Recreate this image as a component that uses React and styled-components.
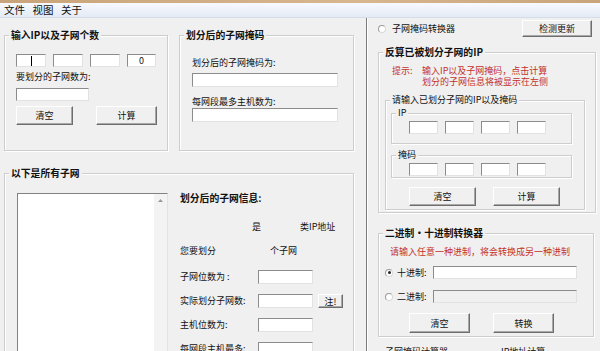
import React from 'react'
import styled, { createGlobalStyle } from 'styled-components'

var RED = '#c3302c'

var GlobalStyle = createGlobalStyle`
  html, body {
    margin: 0;
    padding: 0;
    background: #f0f0f0;
  }
  * {
    box-sizing: border-box;
  }
`

var Window = styled.div`
  width: 600px;
  height: 351px;
  overflow: hidden;
  background: #f0f0f0;
  font-family: "Noto Sans CJK SC", "Noto Sans", sans-serif;
  font-size: 9px;
  line-height: 12px;
  color: #111;
`
var TitleStrip = styled.div`
  height: 3px;
  background: linear-gradient(90deg, #c9a47a, #d8b68e 60%, #c9a47a);
`
var MenuBar = styled.div`
  height: 15px;
  display: flex;
  align-items: center;
  gap: 7.5px;
  padding-left: 4px;
  font-size: 10.5px;
  background: linear-gradient(#f7f9fd, #e4ebf5);
  border-bottom: 1px solid #d5dde8;
`
var MenuItem = styled.span`
  line-height: 14px;
`
var Main = styled.div`
  display: flex;
  height: 333px;
`
var LeftPane = styled.div`
  width: 367px;
  flex: none;
  padding-left: 4px;
  border-right: 1px solid #7a7a7a;
  overflow: hidden;
`
var RightPane = styled.div`
  flex: 1;
  display: flex;
  flex-direction: column;
  align-items: flex-start;
  padding-left: 10px;
  border-left: 1px solid #fff;
  overflow: hidden;
`
var TopRow = styled.div`
  display: flex;
  gap: 11px;
  margin-top: 17px;
`
var Group = styled.div`
  position: relative;
  flex: none;
  width: ${p => p.$w}px;
  height: ${p => p.$h}px;
  margin: ${p => p.$m || '0'};
  padding: ${p => p.$pad || '0'};
  display: flex;
  flex-direction: ${p => p.$row ? 'row' : 'column'};
  align-items: flex-start;
  border: 1px solid #cdcdcd;
  box-shadow: 1px 1px 0 #fff, inset 1px 1px 0 #fff;
`
var GroupTitle = styled.span`
  position: absolute;
  top: -8px;
  left: 4px;
  padding: 0 2px;
  background: #f0f0f0;
  font-size: ${p => p.$bold ? '9.8px' : '9px'};
  font-weight: ${p => p.$bold ? 700 : 400};
  line-height: 14px;
  white-space: nowrap;
`
var Label = styled.div`
  margin-top: ${p => p.$mt || 0}px;
  line-height: 12px;
  white-space: nowrap;
`
var Field = styled.div`
  flex: none;
  width: ${p => p.$w}px;
  height: ${p => p.$h || 13}px;
  margin-top: ${p => p.$mt || 0}px;
  display: flex;
  align-items: center;
  justify-content: center;
  background: ${p => p.$off ? '#f0f0f0' : '#fff'};
  border: 1px solid;
  border-color: #8c8c8c #e2e2e2 #e2e2e2 #8c8c8c;
  font-size: 9px;
`
var Caret = styled.span`
  width: 1px;
  height: 10px;
  background: #000;
`
var FieldRow = styled.div`
  display: flex;
  gap: 7px;
`
var ButtonRow = styled.div`
  display: flex;
  gap: ${p => p.$gap}px;
  margin-top: ${p => p.$mt || 0}px;
  padding-left: ${p => p.$pl || 0}px;
`
var Button = styled.button`
  flex: none;
  width: ${p => p.$w}px;
  height: ${p => p.$h || 19}px;
  margin: ${p => p.$m || '0'};
  padding: 0;
  font-family: inherit;
  font-size: 9px;
  color: #111;
  background: #f0f0f0;
  border: 1px solid;
  border-color: #fff #6e6e6e #6e6e6e #fff;
  box-shadow: inset -1px -1px 0 #a8a8a8;
`
var ListBox = styled.div`
  display: flex;
  width: 151px;
  height: 170px;
  margin: 19px 0 0 12px;
  border: 1px solid;
  border-color: #828282 #e2e2e2 #e2e2e2 #828282;
`
var ListArea = styled.div`
  flex: 1;
  background: #fff;
`
var ScrollBar = styled.div`
  width: 13px;
  background: #f3f3f3;
  display: flex;
  flex-direction: column;
`
var ScrollArrow = styled.div`
  height: 13px;
  display: flex;
  align-items: center;
  justify-content: center;
`
var InfoCol = styled.div`
  display: flex;
  flex-direction: column;
  margin-left: 12px;
  padding-top: 17px;
`
var InfoTitle = styled.div`
  font-size: 9.8px;
  font-weight: 700;
  line-height: 14px;
`
var InfoLine = styled.div`
  display: flex;
  margin-top: ${p => p.$mt}px;
  line-height: 12px;
`
var Cell = styled.span`
  width: ${p => p.$w}px;
  flex: none;
`
var FormGrid = styled.div`
  display: grid;
  grid-template-columns: 78px 55px auto;
  grid-auto-rows: 14px;
  row-gap: 10px;
  align-items: center;
  margin-top: 13px;
`
var TopBar = styled.div`
  display: flex;
  align-items: center;
  width: 100%;
  height: 17px;
  margin-top: 2px;
`
var Radio = styled.span`
  flex: none;
  width: 8px;
  height: 8px;
  border-radius: 50%;
  border: 1px solid #9c9c9c;
  border-right-color: #d8d8d8;
  border-bottom-color: #d8d8d8;
  background: #fff;
  display: flex;
  align-items: center;
  justify-content: center;
  &::after {
    content: '';
    width: 3px;
    height: 3px;
    border-radius: 50%;
    background: ${p => p.$on ? '#222' : 'transparent'};
  }
`
var RadioText = styled.span`
  margin-left: ${p => p.$ml || 6}px;
  width: ${p => p.$w ? p.$w + 'px' : 'auto'};
  flex: none;
  white-space: nowrap;
`
var Hint = styled.div`
  display: flex;
  color: ${RED};
  margin: 12px 0 0 13px;
  line-height: 11px;
`
var HintHead = styled.span`
  width: 30px;
  flex: none;
`
var RedLine = styled.div`
  color: ${RED};
  margin: 12px 0 0 11px;
  line-height: 12px;
  white-space: nowrap;
`
var RadioRow = styled.div`
  display: flex;
  align-items: center;
  height: 13px;
  margin-top: ${p => p.$mt}px;
  padding-left: 6px;
`
var FooterRow = styled.div`
  display: flex;
  margin-top: 9px;
  padding-left: 7px;
`

function Fields({ values = ['', '', '', ''], w = 30, last = 29, caret }) {
  return (
    <FieldRow>
      {values.map((v, i) => (
        <Field key={i} $w={i === 3 ? last : w}>
          {caret && i === 0 ? <Caret /> : v}
        </Field>
      ))}
    </FieldRow>
  )
}

export default function App() {
  return (
    <Window>
      <GlobalStyle />
      <TitleStrip />
      <MenuBar>
        <MenuItem>文件</MenuItem>
        <MenuItem>视图</MenuItem>
        <MenuItem>关于</MenuItem>
      </MenuBar>
      <Main>
        <LeftPane>
          <TopRow>
            <Group $w={164} $h={116} $pad="18px 0 0 11px">
              <GroupTitle $bold>输入IP以及子网个数</GroupTitle>
              <Fields values={['', '', '', '0']} caret />
              <Label $mt={4}>要划分的子网数为:</Label>
              <Field $w={73} $mt={5} />
              <ButtonRow $gap={23} $mt={5}>
                <Button $w={57}>清空</Button>
                <Button $w={61}>计算</Button>
              </ButtonRow>
            </Group>
            <Group $w={175} $h={116} $pad="21px 0 0 12px">
              <GroupTitle $bold>划分后的子网掩码</GroupTitle>
              <Label>划分后的子网掩码为:</Label>
              <Field $w={146} $h={14} $mt={4} />
              <Label $mt={9}>每网段最多主机数为:</Label>
              <Field $w={146} $h={14} />
            </Group>
          </TopRow>
          <Group $w={350} $h={200} $m="22px 0 0 0" $row>
            <GroupTitle $bold>以下是所有子网</GroupTitle>
            <ListBox>
              <ListArea />
              <ScrollBar>
                <ScrollArrow>
                  <svg width="5" height="3" viewBox="0 0 5 3">
                    <path d="M0 3 L2.5 0 L5 3 Z" fill="#9a9a9a" />
                  </svg>
                </ScrollArrow>
              </ScrollBar>
            </ListBox>
            <InfoCol>
              <InfoTitle>划分后的子网信息:</InfoTitle>
              <InfoLine $mt={16}>
                <Cell $w={72} />
                <Cell $w={48}>是</Cell>
                <span>类IP地址</span>
              </InfoLine>
              <InfoLine $mt={12}>
                <Cell $w={90}>您要划分</Cell>
                <span>个子网</span>
              </InfoLine>
              <FormGrid>
                <span>子网位数为 :</span>
                <Field $w={55} $h={14} />
                <span />
                <span>实际划分子网数:</span>
                <Field $w={55} $h={14} />
                <Button $w={25} $h={14} $m="0 0 0 5px">注!</Button>
                <span>主机位数为:</span>
                <Field $w={55} $h={14} />
                <span />
                <span>每网段主机最多:</span>
                <Field $w={55} $h={14} />
                <span />
              </FormGrid>
            </InfoCol>
          </Group>
        </LeftPane>
        <RightPane>
          <TopBar>
            <Radio />
            <RadioText>子网掩码转换器</RadioText>
            <Button $w={70} $h={17} $m="0 8px 0 auto">检测更新</Button>
          </TopBar>
          <Group $w={218} $h={161} $m="15px 0 0 0">
            <GroupTitle $bold>反算已被划分子网的IP</GroupTitle>
            <Hint>
              <HintHead>提示:</HintHead>
              <div>
                <div>输入IP以及子网掩码，点击计算</div>
                <div>划分的子网信息将被显示在左侧</div>
              </div>
            </Hint>
            <Group $w={200} $h={110} $m="13px 0 0 6px">
              <GroupTitle>请输入已划分子网的IP以及掩码</GroupTitle>
              <Group $w={181} $h={31} $m="12px 0 0 5px" $pad="7px 0 0 17px">
                <GroupTitle>IP</GroupTitle>
                <Fields w={29} last={29} />
              </Group>
              <Group $w={181} $h={23} $m="11px 0 0 5px" $pad="7px 0 0 17px">
                <GroupTitle>掩码</GroupTitle>
                <Fields w={29} last={29} />
              </Group>
              <ButtonRow $gap={17} $mt={9} $pl={23}>
                <Button $w={67}>清空</Button>
                <Button $w={67}>计算</Button>
              </ButtonRow>
            </Group>
          </Group>
          <Group $w={216} $h={104} $m="20px 0 0 0">
            <GroupTitle $bold>二进制・十进制转换器</GroupTitle>
            <RedLine>请输入任意一种进制，将会转换成另一种进制</RedLine>
            <RadioRow $mt={8}>
              <Radio $on />
              <RadioText $ml={4} $w={36}>十进制:</RadioText>
              <Field $w={144} />
            </RadioRow>
            <RadioRow $mt={11}>
              <Radio />
              <RadioText $ml={4} $w={36}>二进制:</RadioText>
              <Field $w={144} $off />
            </RadioRow>
            <ButtonRow $gap={23} $mt={10} $pl={30}>
              <Button $w={61} $h={20}>清空</Button>
              <Button $w={61} $h={20}>转换</Button>
            </ButtonRow>
          </Group>
          <FooterRow>
            <Cell $w={116}>子网掩码计算器</Cell>
            <span>IP地址计算</span>
          </FooterRow>
        </RightPane>
      </Main>
    </Window>
  )
}
